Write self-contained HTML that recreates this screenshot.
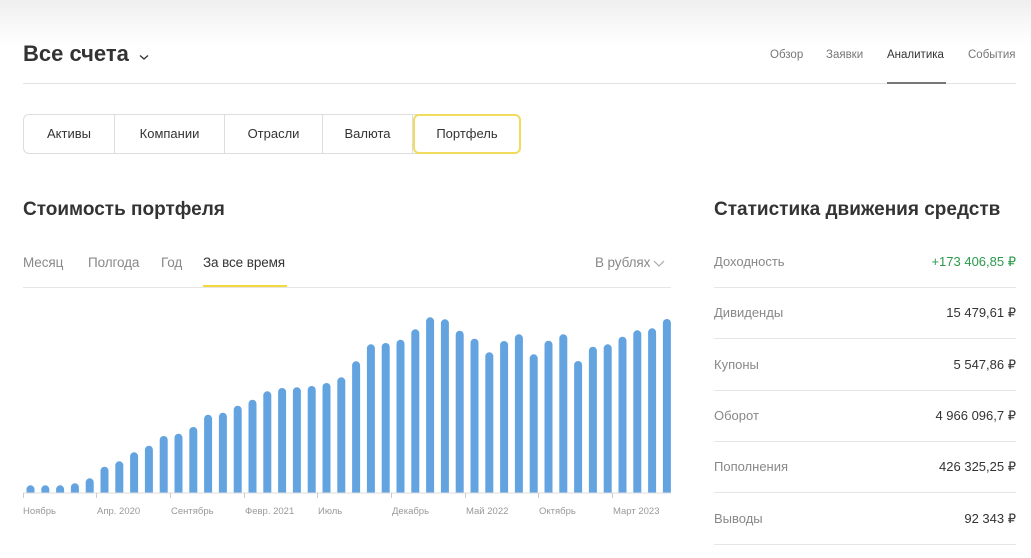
<!DOCTYPE html>
<html><head><meta charset="utf-8">
<style>
*{margin:0;padding:0;box-sizing:border-box}
body{width:1031px;height:558px;overflow:hidden;background:#fff;font-family:"Liberation Sans",sans-serif;color:#333;position:relative}
.a{position:absolute;white-space:nowrap}
.top{position:absolute;left:0;top:0;width:1031px;height:48px;background:linear-gradient(#efefef,#fafafa 60%,#ffffff)}
.nav{font-size:11.5px;color:#777;top:49px}
.seg{position:absolute;left:23px;top:114px;width:497px;height:40px;border:1px solid #ddd;border-radius:6px}
.seg div{position:absolute;top:0;height:38px;line-height:38px;text-align:center;font-size:13px;color:#333;border-right:1px solid #ddd}
.h2{font-size:19px;font-weight:bold;color:#333}
.per{font-size:13.5px;color:#888;top:255px;letter-spacing:-0.1px}
.lbl{font-size:13px;color:#888;left:714px}
.val{font-size:13px;color:#333;right:15px;text-align:right}
.sep{position:absolute;left:714px;width:302px;height:1px;background:#e6e6e6}
.xl{font-size:9.5px;color:#999;top:506px}
</style></head><body>
<div class="top"></div>
<div class="a" style="left:23px;top:41px;font-size:22px;font-weight:bold;color:#333">Все счета</div>
<svg class="a" style="left:138px;top:52px" width="12" height="10" viewBox="0 0 12 10"><path d="M2 3.5 L6 7 L10 3.5" fill="none" stroke="#333" stroke-width="1.3"/></svg>
<div class="a nav" style="left:770px">Обзор</div>
<div class="a nav" style="left:826px">Заявки</div>
<div class="a nav" style="left:887px;color:#333">Аналитика</div>
<div class="a nav" style="left:968px">События</div>
<div class="a" style="left:23px;top:83px;width:993px;height:1px;background:#e2e2e2"></div>
<div class="a" style="left:887px;top:82px;width:59px;height:2px;background:#777"></div>

<div class="seg">
<div style="left:0;width:91px">Активы</div>
<div style="left:91px;width:110px">Компании</div>
<div style="left:201px;width:98px">Отрасли</div>
<div style="left:299px;width:90px">Валюта</div>
<div style="left:389px;width:108px;top:-1px;height:40px;border:2px solid #f2dc5d;border-radius:6px;line-height:36px">Портфель</div>
</div>

<div class="a h2" style="left:23px;top:199px">Стоимость портфеля</div>
<div class="a per" style="left:23px">Месяц</div>
<div class="a per" style="left:88px">Полгода</div>
<div class="a per" style="left:161px">Год</div>
<div class="a per" style="left:203px;color:#333">За все время</div>
<div class="a per" style="left:595px">В рублях</div>
<svg class="a" style="left:653px;top:259px" width="12" height="9" viewBox="0 0 12 9"><path d="M1 2 L6 7 L11 2" fill="none" stroke="#aaa" stroke-width="1.2"/></svg>
<div class="a" style="left:23px;top:287px;width:648px;height:1px;background:#e6e6e6"></div>
<div class="a" style="left:203px;top:285px;width:84px;height:2px;background:#f5d83c"></div>

<svg class="a" style="left:0;top:0" width="680" height="520">
<g fill="#63a4e0">
<rect x="26.5" y="485.3" width="8" height="12" rx="4"/>
<rect x="41.3" y="485.3" width="8" height="12" rx="4"/>
<rect x="56.1" y="485.3" width="8" height="12" rx="4"/>
<rect x="70.9" y="483.3" width="8" height="14" rx="4"/>
<rect x="85.7" y="478.3" width="8" height="19" rx="4"/>
<rect x="100.5" y="466.7" width="8" height="30" rx="4"/>
<rect x="115.3" y="461.3" width="8" height="36" rx="4"/>
<rect x="130.1" y="452.3" width="8" height="45" rx="4"/>
<rect x="144.9" y="445.7" width="8" height="51" rx="4"/>
<rect x="159.7" y="436" width="8" height="61" rx="4"/>
<rect x="174.5" y="433.7" width="8" height="63" rx="4"/>
<rect x="189.3" y="427" width="8" height="70" rx="4"/>
<rect x="204.1" y="414.7" width="8" height="82" rx="4"/>
<rect x="218.9" y="412.7" width="8" height="84" rx="4"/>
<rect x="233.7" y="405.7" width="8" height="91" rx="4"/>
<rect x="248.5" y="399.7" width="8" height="97" rx="4"/>
<rect x="263.3" y="391.3" width="8" height="106" rx="4"/>
<rect x="278.1" y="388" width="8" height="109" rx="4"/>
<rect x="292.9" y="387.3" width="8" height="110" rx="4"/>
<rect x="307.7" y="386" width="8" height="111" rx="4"/>
<rect x="322.5" y="383" width="8" height="114" rx="4"/>
<rect x="337.3" y="377.3" width="8" height="120" rx="4"/>
<rect x="352.1" y="361.3" width="8" height="136" rx="4"/>
<rect x="366.9" y="344.3" width="8" height="153" rx="4"/>
<rect x="381.7" y="343" width="8" height="154" rx="4"/>
<rect x="396.5" y="339.7" width="8" height="157" rx="4"/>
<rect x="411.3" y="329.3" width="8" height="168" rx="4"/>
<rect x="426.1" y="317.3" width="8" height="180" rx="4"/>
<rect x="440.9" y="319.3" width="8" height="178" rx="4"/>
<rect x="455.7" y="330.7" width="8" height="166" rx="4"/>
<rect x="470.5" y="338.7" width="8" height="158" rx="4"/>
<rect x="485.3" y="352.3" width="8" height="145" rx="4"/>
<rect x="500.1" y="341" width="8" height="156" rx="4"/>
<rect x="514.9" y="334.3" width="8" height="163" rx="4"/>
<rect x="529.7" y="354.3" width="8" height="143" rx="4"/>
<rect x="544.5" y="340.7" width="8" height="156" rx="4"/>
<rect x="559.3" y="334.3" width="8" height="163" rx="4"/>
<rect x="574.1" y="361" width="8" height="136" rx="4"/>
<rect x="588.9" y="346.7" width="8" height="150" rx="4"/>
<rect x="603.7" y="344.3" width="8" height="153" rx="4"/>
<rect x="618.5" y="336.7" width="8" height="160" rx="4"/>
<rect x="633.3" y="330.3" width="8" height="167" rx="4"/>
<rect x="648.1" y="328.3" width="8" height="169" rx="4"/>
<rect x="662.9" y="319" width="8" height="178" rx="4"/>
</g>
<rect x="0" y="493" width="680" height="27" fill="#fff"/>
<rect x="23" y="492.5" width="648" height="1" fill="#ddd"/>
<g fill="#ccc">
<rect x="23" y="493" width="1" height="5"/><rect x="96" y="493" width="1" height="5"/><rect x="170" y="493" width="1" height="5"/><rect x="244" y="493" width="1" height="5"/><rect x="317" y="493" width="1" height="5"/><rect x="391" y="493" width="1" height="5"/><rect x="465" y="493" width="1" height="5"/><rect x="538" y="493" width="1" height="5"/><rect x="612" y="493" width="1" height="5"/>
</g>
</svg>
<div class="a xl" style="left:23px">Ноябрь</div>
<div class="a xl" style="left:97px">Апр. 2020</div>
<div class="a xl" style="left:171px">Сентябрь</div>
<div class="a xl" style="left:245px">Февр. 2021</div>
<div class="a xl" style="left:318px">Июль</div>
<div class="a xl" style="left:392px">Декабрь</div>
<div class="a xl" style="left:466px">Май 2022</div>
<div class="a xl" style="left:539px">Октябрь</div>
<div class="a xl" style="left:613px">Март 2023</div>

<div class="a h2" style="left:714px;top:199px">Статистика движения средств</div>
<div class="a lbl" style="top:254px">Доходность</div><div class="a val" style="top:254px;color:#2a9a4a">+173 406,85 ₽</div>
<div class="sep" style="top:287px"></div>
<div class="a lbl" style="top:305px">Дивиденды</div><div class="a val" style="top:305px">15 479,61 ₽</div>
<div class="sep" style="top:338px"></div>
<div class="a lbl" style="top:357px">Купоны</div><div class="a val" style="top:357px">5 547,86 ₽</div>
<div class="sep" style="top:390px"></div>
<div class="a lbl" style="top:408px">Оборот</div><div class="a val" style="top:408px">4 966 096,7 ₽</div>
<div class="sep" style="top:441px"></div>
<div class="a lbl" style="top:459px">Пополнения</div><div class="a val" style="top:459px">426 325,25 ₽</div>
<div class="sep" style="top:492px"></div>
<div class="a lbl" style="top:511px">Выводы</div><div class="a val" style="top:511px">92 343 ₽</div>
<div class="sep" style="top:544px"></div>
</body></html>
